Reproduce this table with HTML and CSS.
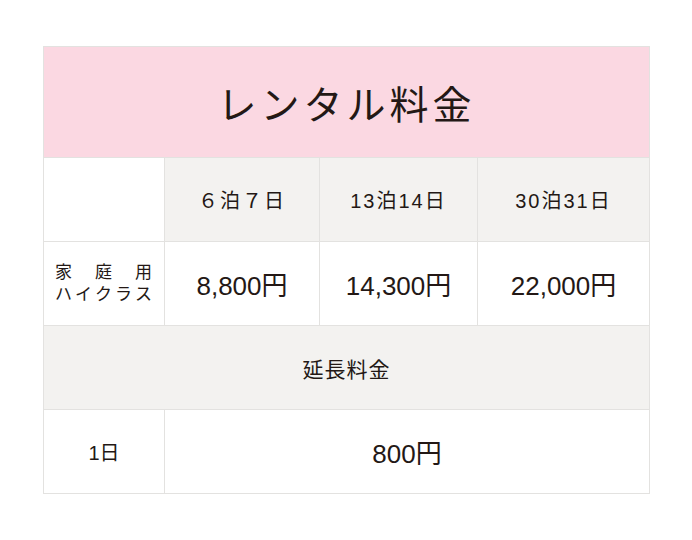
FILE: index.html
```html
<!DOCTYPE html>
<html lang="ja">
<head>
<meta charset="utf-8">
<link rel="stylesheet" href="styles.css">
</head>
<body>
<div class="wrap">
<table class="price">
  <colgroup>
    <col class="c1"><col class="c2"><col class="c3"><col class="c4">
  </colgroup>
  <tr class="row-title">
    <th colspan="4" class="title">レンタル料金</th>
  </tr>
  <tr class="row">
    <td class="blank"></td>
    <th class="head">６泊７日</th>
    <th class="head">13泊14日</th>
    <th class="head">30泊31日</th>
  </tr>
  <tr class="row">
    <td class="label">
      <span class="line"><span>家</span><span>庭</span><span>用</span></span>
      <span class="line"><span>ハ</span><span>イ</span><span>ク</span><span>ラ</span><span>ス</span></span>
    </td>
    <td class="price-cell">8,800円</td>
    <td class="price-cell">14,300円</td>
    <td class="price-cell">22,000円</td>
  </tr>
  <tr class="row">
    <th colspan="4" class="head ext">延長料金</th>
  </tr>
  <tr class="row">
    <td class="day">1日</td>
    <td colspan="3" class="price-cell">800円</td>
  </tr>
</table>
</div>
</body>
</html>
```

FILE: styles.css
```css
html, body {
  margin: 0;
  padding: 0;
  background: #ffffff;
}
body {
  font-family: "Liberation Sans", "Noto Sans CJK JP", sans-serif;
  color: #231815;
}
.wrap {
  padding: 46px 0 0 43px;
}
.price {
  border-collapse: collapse;
  table-layout: fixed;
  width: 606px;
}
.c1 { width: 121px; }
.c2 { width: 155px; }
.c3 { width: 158px; }
.c4 { width: 172px; }
.price th,
.price td {
  border: 1px solid #e3e2e0;
  padding: 0;
  text-align: center;
  vertical-align: middle;
  font-weight: 400;
}
.row-title .title {
  height: 110px;
  background: #fbd8e2;
  font-family: "Noto Sans CJK JP", sans-serif;
  font-size: 39px;
  letter-spacing: 4px;
  line-height: 1;
}
.row td,
.row th {
  height: 83px;
}
.head {
  background: #f3f2f0;
  font-size: 20px;
  letter-spacing: 2px;
}
.ext {
  font-size: 21px;
  letter-spacing: 1px;
}
.blank {
  background: #ffffff;
}
.label {
  padding: 0 12px 0 11px !important;
  font-size: 17px;
  line-height: 22px;
}
.label .line {
  display: flex;
  justify-content: space-between;
}
.price-cell {
  font-size: 26px;
}
.day {
  font-size: 20px;
}
```
